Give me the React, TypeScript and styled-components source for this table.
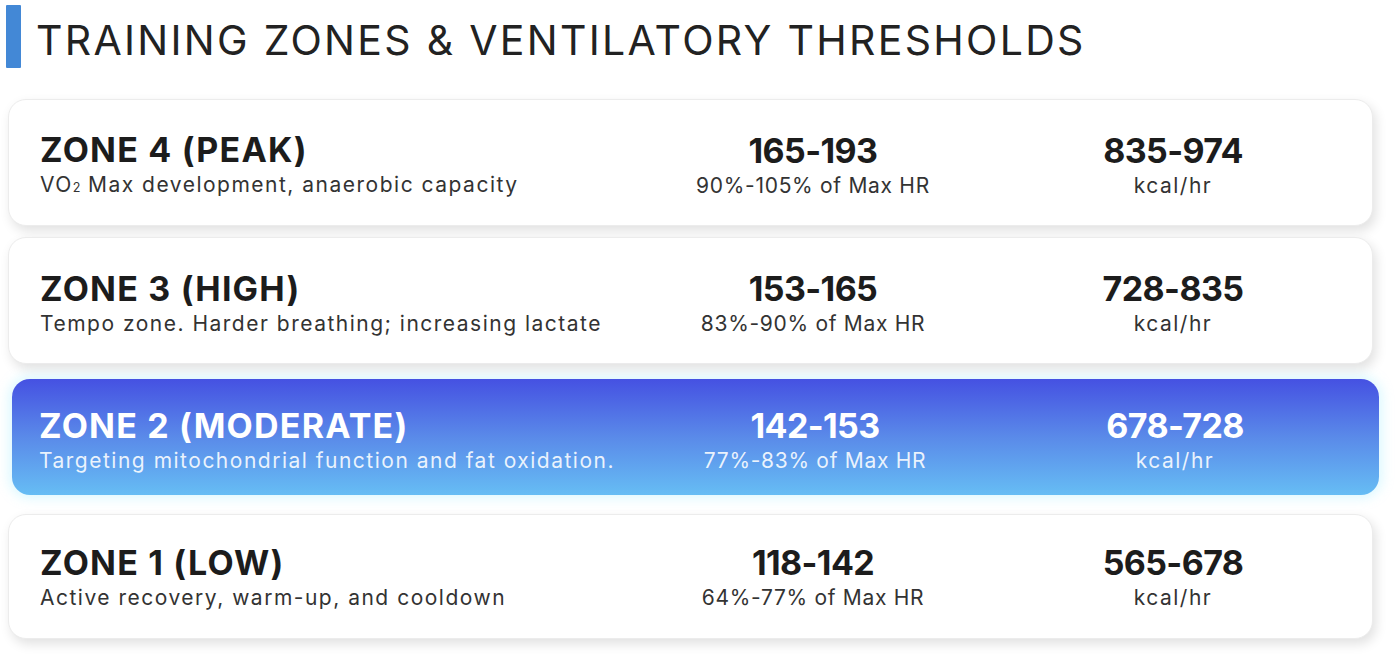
import React from "react";
import styled, { createGlobalStyle } from "styled-components";

const GlobalStyle = createGlobalStyle`
  html, body { margin: 0; padding: 0; background: #ffffff; }
  body { font-family: "Inter", "Open Sans", sans-serif; color: #1c1c1c; }
  * { box-sizing: border-box; }
`;

const Page = styled.div`
  width: 1400px;
  height: 661px;
  overflow: hidden;
  background: #ffffff;
`;

const Header = styled.header`
  display: flex;
  align-items: center;
  gap: 15px;
  padding: 5px 0 0 6px;
`;

const Bar = styled.div`
  width: 15px;
  height: 63px;
  background: #4388d6;
  border-radius: 1px;
`;

const Title = styled.h1`
  margin: 0;
  font-size: 41px;
  font-weight: 400;
  letter-spacing: 2.3px;
  color: #222222;
  line-height: 1;
  padding-top: 8px;
`;

const List = styled.div`
  display: flex;
  flex-direction: column;
  gap: 11px;
  padding: 31px 27px 0 8px;
`;

const Card = styled.div<{ $active?: boolean; $h: number }>`
  display: grid;
  grid-template-columns: 1fr 360px 360px;
  align-items: center;
  height: ${(p) => p.$h}px;
  border-radius: 18px;
  padding: ${(p) => (p.$active ? "0 24px 0 27px" : "0 19px 0 31px")};
  margin: ${(p) => (p.$active ? "4px -6px 8px 4px" : "0")};
  background: ${(p) =>
    p.$active
      ? "linear-gradient(180deg, #4551e2 0%, #5a8ae9 50%, #66bdf4 100%)"
      : "#ffffff"};
  border: ${(p) => (p.$active ? "none" : "1px solid #ececec")};
  box-shadow: ${(p) =>
    p.$active
      ? "0 0 12px 3px rgba(150, 235, 255, 0.35)"
      : "3px 5px 12px rgba(0, 0, 0, 0.12)"};
  color: ${(p) => (p.$active ? "#ffffff" : "#1c1c1c")};
`;

const Col = styled.div<{ $center?: boolean; $shift: number }>`
  display: flex;
  flex-direction: column;
  align-items: ${(p) => (p.$center ? "center" : "flex-start")};
  padding-top: ${(p) => p.$shift}px;
`;

const Big = styled.div<{ $num?: boolean }>`
  font-size: 34px;
  font-weight: 700;
  line-height: 42px;
  letter-spacing: ${(p) => (p.$num ? "-0.6px" : "1.2px")};
`;

const Small = styled.div<{ $active?: boolean; $tight?: boolean }>`
  font-size: 21px;
  font-weight: 400;
  line-height: 26px;
  margin-top: 1px;
  letter-spacing: ${(p) => (p.$tight ? "0.7px" : "1.5px")};
  color: ${(p) => (p.$active ? "rgba(255,255,255,0.88)" : "#333333")};
`;

const Sub = styled.span`
  font-size: 0.6em;
  vertical-align: baseline;
  letter-spacing: 0;
`;

type Zone = {
  name: string;
  desc: React.ReactNode;
  hr: string;
  pct: string;
  kcal: string;
  active?: boolean;
  h: number;
  shift: number;
};

const zones: Zone[] = [
  {
    name: "ZONE 4 (PEAK)",
    desc: (
      <>
        VO<Sub>2</Sub> Max development, anaerobic capacity
      </>
    ),
    hr: "165-193",
    pct: "90%-105% of Max HR",
    kcal: "835-974",
    h: 127,
    shift: 4,
  },
  {
    name: "ZONE 3 (HIGH)",
    desc: "Tempo zone. Harder breathing; increasing lactate",
    hr: "153-165",
    pct: "83%-90% of Max HR",
    kcal: "728-835",
    h: 127,
    shift: 4,
  },
  {
    name: "ZONE 2 (MODERATE)",
    desc: "Targeting mitochondrial function and fat oxidation.",
    hr: "142-153",
    pct: "77%-83% of Max HR",
    kcal: "678-728",
    active: true,
    h: 116,
    shift: 4,
  },
  {
    name: "ZONE 1 (LOW)",
    desc: "Active recovery, warm-up, and cooldown",
    hr: "118-142",
    pct: "64%-77% of Max HR",
    kcal: "565-678",
    h: 125,
    shift: 0,
  },
];

export default function App() {
  return (
    <Page>
      <GlobalStyle />
      <Header>
        <Bar />
        <Title>TRAINING ZONES &amp; VENTILATORY THRESHOLDS</Title>
      </Header>
      <List>
        {zones.map((z) => (
          <Card key={z.name} $active={z.active} $h={z.h}>
            <Col $shift={z.shift}>
              <Big>{z.name}</Big>
              <Small $active={z.active}>{z.desc}</Small>
            </Col>
            <Col $center $shift={z.shift}>
              <Big $num>{z.hr}</Big>
              <Small $active={z.active} $tight>
                {z.pct}
              </Small>
            </Col>
            <Col $center $shift={z.shift}>
              <Big $num>{z.kcal}</Big>
              <Small $active={z.active}>kcal/hr</Small>
            </Col>
          </Card>
        ))}
      </List>
    </Page>
  );
}
